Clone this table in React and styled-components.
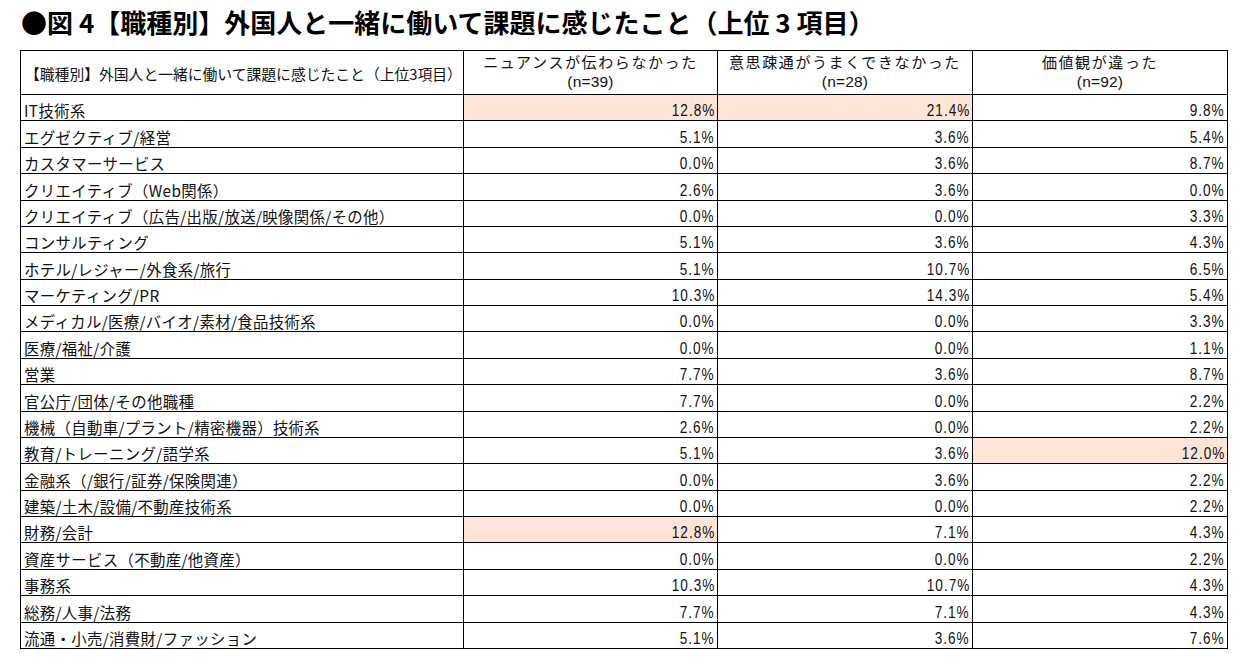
import React from "react";
import styled, { createGlobalStyle } from "styled-components";

const GlobalStyle = createGlobalStyle`
  html, body { margin: 0; padding: 0; background: #fff; }
  body { font-family: "Noto Sans CJK JP", "Noto Sans", sans-serif; color: #111; }
`;

const Page = styled.div`
  width: 1256px;
  height: 671px;
  padding: 0 0 0 20px;
  box-sizing: border-box;
  background: #fff;
`;

const Title = styled.h1`
  margin: 0 0 0 1px;
  height: 50px;
  box-sizing: border-box;
  padding-top: 5px;
  font-size: 26px;
  line-height: 34px;
  font-weight: 700;
  letter-spacing: 0;
  white-space: nowrap;
  color: #000;
`;

const Table = styled.table`
  border-collapse: collapse;
  table-layout: fixed;
  width: 1207px;
`;

const HeadRow = styled.tr`
  height: 44px;
`;

const BodyRow = styled.tr`
  height: 26.38px;
`;

const Cell = styled.td`
  border: 1px solid #000;
  padding: 0;
  white-space: nowrap;
  overflow: hidden;
  background: ${(p) => (p.$hl ? "#FCE4D6" : "#fff")};
`;

const CornerCell = styled(Cell).attrs({ as: "th" })`
  text-align: left;
  vertical-align: middle;
  font-weight: 400;
  font-size: 14.8px;
  padding-left: 4px;
  padding-top: 2px;
`;

const ColHead = styled(Cell).attrs({ as: "th" })`
  text-align: center;
  vertical-align: top;
  font-weight: 400;
`;

const HeadLine = styled.span`
  display: block;
  font-size: 15px;
  line-height: 21px;
  height: 21px;
  letter-spacing: 1.6px;
  margin-top: 0;
`;

const SubCount = styled.span`
  display: block;
  font-family: "Liberation Sans", "Noto Sans", sans-serif;
  font-size: 15.5px;
  line-height: 19px;
  height: 19px;
  letter-spacing: 0.2px;
`;

const LabelCell = styled(Cell)`
  vertical-align: bottom;
  font-size: 15.4px;
  line-height: 19px;
  padding-left: 3px;
  letter-spacing: 0.35px;
`;

const NumCell = styled(Cell)`
  vertical-align: bottom;
  text-align: right;
  padding-right: 2px;
  line-height: 19px;
`;

const Num = styled.span`
  display: inline-block;
  font-family: "Liberation Sans", "Noto Sans", sans-serif;
  font-size: 17px;
  letter-spacing: 1.2px;
  transform: scaleX(0.8);
  transform-origin: right bottom;
`;

const rows = [
  ["IT技術系", 12.8, 21.4, 9.8, [true, true, false]],
  ["エグゼクティブ/経営", 5.1, 3.6, 5.4],
  ["カスタマーサービス", 0.0, 3.6, 8.7],
  ["クリエイティブ（Web関係）", 2.6, 3.6, 0.0],
  ["クリエイティブ（広告/出版/放送/映像関係/その他）", 0.0, 0.0, 3.3],
  ["コンサルティング", 5.1, 3.6, 4.3],
  ["ホテル/レジャー/外食系/旅行", 5.1, 10.7, 6.5],
  ["マーケティング/PR", 10.3, 14.3, 5.4],
  ["メディカル/医療/バイオ/素材/食品技術系", 0.0, 0.0, 3.3],
  ["医療/福祉/介護", 0.0, 0.0, 1.1],
  ["営業", 7.7, 3.6, 8.7],
  ["官公庁/団体/その他職種", 7.7, 0.0, 2.2],
  ["機械（自動車/プラント/精密機器）技術系", 2.6, 0.0, 2.2],
  ["教育/トレーニング/語学系", 5.1, 3.6, 12.0, [false, false, true]],
  ["金融系（/銀行/証券/保険関連）", 0.0, 3.6, 2.2],
  ["建築/土木/設備/不動産技術系", 0.0, 0.0, 2.2],
  ["財務/会計", 12.8, 7.1, 4.3, [true, false, false]],
  ["資産サービス（不動産/他資産）", 0.0, 0.0, 2.2],
  ["事務系", 10.3, 10.7, 4.3],
  ["総務/人事/法務", 7.7, 7.1, 4.3],
  ["流通・小売/消費財/ファッション", 5.1, 3.6, 7.6],
];

const heads = [
  ["ニュアンスが伝わらなかった", "(n=39)"],
  ["意思疎通がうまくできなかった", "(n=28)"],
  ["価値観が違った", "(n=92)"],
];

export default function App() {
  return (
    <Page>
      <GlobalStyle />
      <Title>●図 4【職種別】外国人と一緒に働いて課題に感じたこと（上位 3 項目）</Title>
      <Table>
        <colgroup>
          <col style={{ width: 443 }} />
          <col style={{ width: 254 }} />
          <col style={{ width: 255 }} />
          <col style={{ width: 255 }} />
        </colgroup>
        <thead>
          <HeadRow>
            <CornerCell>【職種別】外国人と一緒に働いて課題に感じたこと（上位3項目）</CornerCell>
            {heads.map(([t, n]) => (
              <ColHead key={t}>
                <HeadLine>{t}</HeadLine>
                <SubCount>{n}</SubCount>
              </ColHead>
            ))}
          </HeadRow>
        </thead>
        <tbody>
          {rows.map(([label, a, b, c, hl = [false, false, false]]) => (
            <BodyRow key={label}>
              <LabelCell>{label}</LabelCell>
              {[a, b, c].map((v, i) => (
                <NumCell key={i} $hl={hl[i]}>
                  <Num>{v.toFixed(1)}%</Num>
                </NumCell>
              ))}
            </BodyRow>
          ))}
        </tbody>
      </Table>
    </Page>
  );
}
